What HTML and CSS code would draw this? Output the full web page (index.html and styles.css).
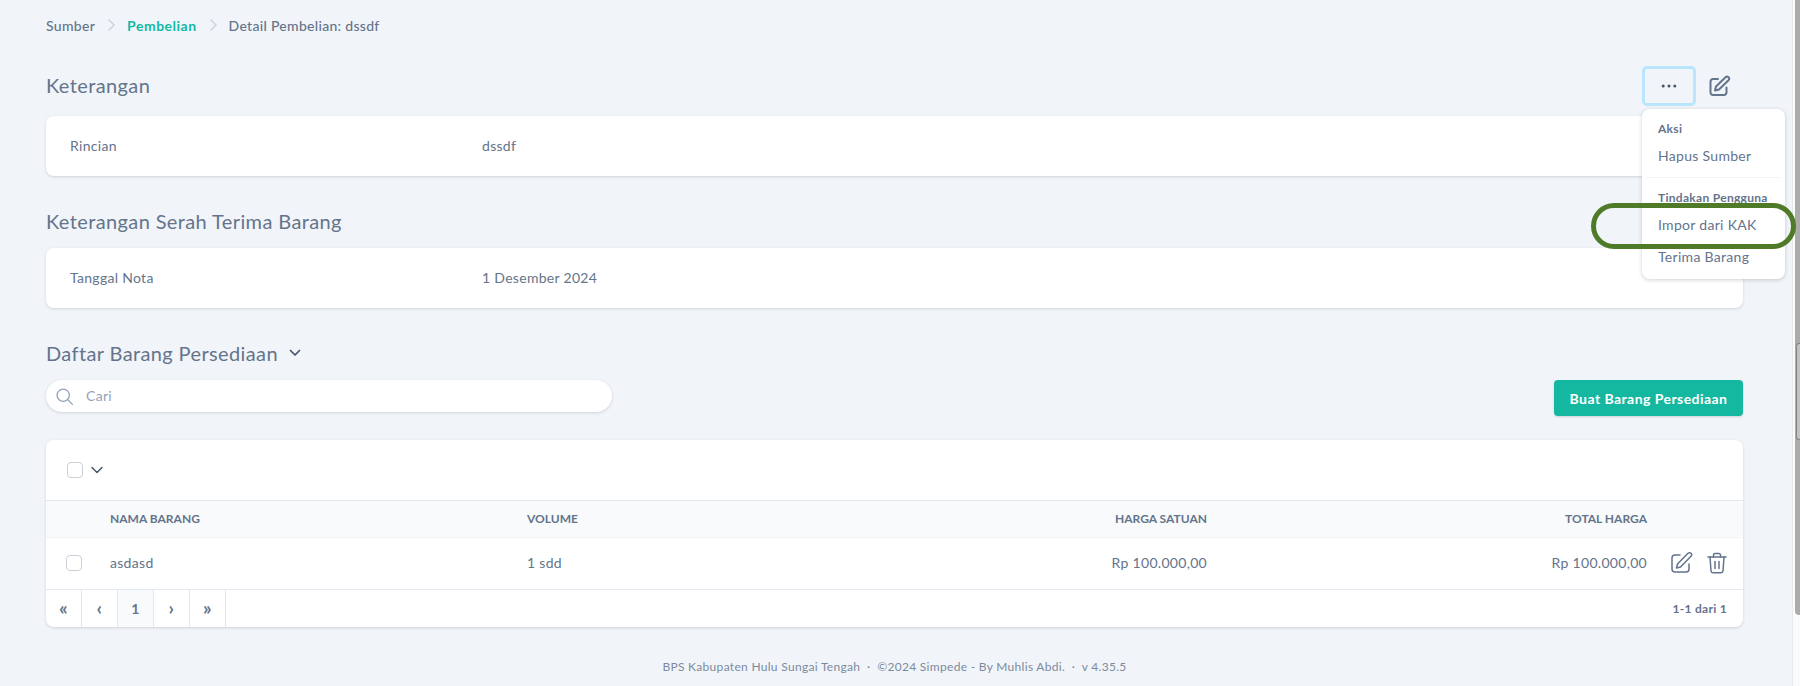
FILE: index.html
```html
<!DOCTYPE html>
<html lang="id">
<head>
<meta charset="utf-8">
<title>Detail Pembelian: dssdf</title>
<link rel="stylesheet" href="styles.css">
</head>
<body>
<div class="page">
  <main class="content">
    <nav class="crumbs">
      <span>Sumber</span>
      <svg class="crumb-sep" viewBox="0 0 20 20" fill="none" stroke="currentColor" stroke-width="1.5"><path d="M7.500 4.500 13 10l-5.500 5.500"/></svg>
      <span class="crumb-active">Pembelian</span>
      <svg class="crumb-sep" viewBox="0 0 20 20" fill="none" stroke="currentColor" stroke-width="1.5"><path d="M7.500 4.500 13 10l-5.500 5.500"/></svg>
      <span>Detail Pembelian: dssdf</span>
    </nav>

    <header class="head-row">
      <h2 class="section-title">Keterangan</h2>
      <div class="head-actions">
        <button class="more-btn" type="button" aria-label="Aksi">
          <svg viewBox="0 0 24 24" width="20" height="20" fill="currentColor"><circle cx="5" cy="12" r="1.800"/><circle cx="12" cy="12" r="1.800"/><circle cx="19" cy="12" r="1.800"/></svg>
        </button>
        <svg class="head-edit" viewBox="0 0 24 24" fill="none" stroke="currentColor" stroke-width="2" stroke-linecap="round" stroke-linejoin="round"><path d="M11 5H6a2.500 2.500 0 0 0-2.500 2.500v11A2.500 2.500 0 0 0 6 21h11a2.500 2.500 0 0 0 2.500-2.500v-5"/><path d="M18.500 3.200a2.100 2.100 0 0 1 3 3L12 15.500l-4 1 1-4z"/></svg>
        <div class="menu">
          <div class="menu-label">Aksi</div>
          <div class="menu-item menu-item-hapus">Hapus Sumber</div>
          <div class="menu-divider"></div>
          <div class="menu-label menu-label-user">Tindakan Pengguna</div>
          <div class="menu-item menu-item-kak">Impor dari KAK</div>
          <div class="menu-item menu-item-last">Terima Barang</div>
          <div class="highlight"></div>
        </div>
      </div>
    </header>
    <section class="card info-card">
      <div class="info-label">Rincian</div>
      <div>dssdf</div>
    </section>

    <h2 class="section-title title-second">Keterangan Serah Terima Barang</h2>
    <section class="card info-card info-card-second">
      <div class="info-label">Tanggal Nota</div>
      <div>1 Desember 2024</div>
    </section>

    <h2 class="section-title title-third">Daftar Barang Persediaan
      <svg class="title-chevron" viewBox="0 0 20 20" fill="none" stroke="currentColor" stroke-width="1.700" stroke-linecap="round" stroke-linejoin="round"><path d="m5.500 7.500 4.500 4.500 4.500-4.500"/></svg>
    </h2>

    <div class="toolbar">
      <div class="search">
        <svg class="search-icon" viewBox="0 0 24 24" fill="none" stroke="currentColor" stroke-width="1.500" stroke-linecap="round"><circle cx="10.500" cy="10.500" r="7"/><path d="m15.800 15.800 5.200 5.200"/></svg>
        <span class="search-text">Cari</span>
      </div>
      <button class="primary-btn" type="button">Buat Barang Persediaan</button>
    </div>

    <section class="card table-card">
      <div class="table-top">
        <span class="check"></span>
        <svg class="top-chevron" viewBox="0 0 20 20" fill="none" stroke="currentColor" stroke-width="1.500" stroke-linecap="round" stroke-linejoin="round"><path d="m5 7.500 5 5 5-5"/></svg>
      </div>
      <div class="grid-row grid-head">
        <span></span>
        <span>NAMA BARANG</span>
        <span>VOLUME</span>
        <span class="num">HARGA SATUAN</span>
        <span class="num">TOTAL HARGA</span>
        <span></span>
      </div>
      <div class="grid-row grid-body">
        <span class="check"></span>
        <span>asdasd</span>
        <span>1 sdd</span>
        <span class="num">Rp 100.000,00</span>
        <span class="num">Rp 100.000,00</span>
        <span class="row-actions">
          <svg viewBox="0 0 24 24" fill="none" stroke="currentColor" stroke-width="1.500" stroke-linecap="round" stroke-linejoin="round"><path d="M11 4H6a3 3 0 0 0-3 3v11a3 3 0 0 0 3 3h11a3 3 0 0 0 3-3v-5"/><path d="M19 2.300a2.100 2.100 0 0 1 3 3L11.500 16l-4 1 1-4z"/></svg>
          <svg viewBox="0 0 24 24" fill="none" stroke="currentColor" stroke-width="1.500" stroke-linecap="round" stroke-linejoin="round"><path d="M3 6h18"/><path d="M8.500 6V4a1.500 1.500 0 0 1 1.500-1.500h4A1.500 1.500 0 0 1 15.500 4v2"/><path d="m5 6 1 14a2 2 0 0 0 2 1.800h8a2 2 0 0 0 2-1.800l1-14"/><path d="M10 10.500v7M14 10.500v7"/></svg>
        </span>
      </div>
      <div class="pager">
        <span class="page-btn page-glyph">«</span>
        <span class="page-btn page-glyph">‹</span>
        <span class="page-btn page-current">1</span>
        <span class="page-btn page-glyph">›</span>
        <span class="page-btn page-glyph">»</span>
        <span class="page-count">1-1 dari 1</span>
      </div>
    </section>

    <footer class="footer">BPS Kabupaten Hulu Sungai Tengah &nbsp;·&nbsp; ©2024 Simpede - By Muhlis Abdi. &nbsp;·&nbsp; v 4.35.5</footer>
  </main>
  <aside class="scrollbar"><div class="thumb"><div class="thumb-over"></div></div></aside>
</div>
</body>
</html>
```

FILE: styles.css
```css
* { box-sizing: border-box; }
html, body { margin: 0; height: 686px; overflow: hidden; }
body {
  background: #f1f5f9;
  color: #64748b;
  font-family: "Lato", "Open Sans", sans-serif;
  font-size: 14px;
  letter-spacing: .3px;
}
.page { display: flex; height: 686px; }
.content { flex: 1; min-width: 0; padding: 16px 49px 0 46px; }
.scrollbar { width: 8px; background: #fafbfc; border-left: 1px solid #e6e8ec; }
.thumb { position: relative; width: 5px; height: 615px; margin-left: 2px; background: #ababab; border-bottom-left-radius: 4px; }
.thumb-over { position: absolute; top: 343px; left: 1px; width: 4px; height: 97px; background: #c2c2c2; border: 1px solid #858585; border-right: 0; border-radius: 3px 0 0 3px; }

.crumbs { display: flex; align-items: center; height: 18px; font-size: 14px; font-weight: 500; }
.crumb-sep { width: 20px; height: 20px; margin: 0 6px; color: #cbd5e1; }
.crumb-active { color: #14b8a6; font-weight: 700; letter-spacing: .5px; }

.head-row { display: flex; justify-content: space-between; align-items: center; margin-top: 32px; height: 40px; }
.section-title { margin: 0; font-size: 20px; font-weight: 400; color: #64748b; letter-spacing: .38px; }
.head-row .section-title { padding-bottom: 3px; }
.head-actions { position: relative; display: flex; align-items: center; }
.more-btn {
  display: flex; align-items: center; justify-content: center;
  width: 54px; height: 40px; padding: 0; margin-right: 11px;
  color: #475569; background: transparent;
  border: 3px solid #bae6fd; border-radius: 5px;
}
.head-edit { width: 24px; height: 24px; margin-right: 12px; color: #64748b; }
.menu {
  position: absolute; z-index: 5; top: 43px; left: 0; width: 143px; height: 170px;
  padding: 12px 16px; background: #fff; border-radius: 8px;
  box-shadow: 0 1px 4px rgba(15, 23, 42, .2);
  white-space: nowrap;
}
.menu-label { font-size: 12px; font-weight: 700; line-height: 16px; }
.menu-item { font-size: 14px; line-height: 20px; }
.menu-item-hapus { margin-top: 9px; }
.menu-divider { height: 1px; margin: 11px -12px 0; background: #f1f5f9; }
.menu-label-user { margin-top: 12px; }
.menu-item-kak { margin-top: 9px; }
.menu-item-last { margin-top: 12px; }
.highlight {
  position: absolute; top: 94px; left: -51px; width: 205px; height: 46px;
  border: 5px solid #4f7a28; border-radius: 23px;
}

.card { background: #fff; border-radius: 8px; box-shadow: 0 1px 3px rgba(15, 23, 42, .15); }
.info-card { display: grid; grid-template-columns: 412px 1fr; align-items: center; height: 60px; margin-top: 10px; padding: 0 24px 2px; }
.title-second { margin-top: 26px; line-height: 38px; height: 40px; }
.info-card-second { margin-top: 6px; }
.title-third { display: flex; align-items: center; gap: 7px; margin-top: 26px; height: 40px; padding-bottom: 3px; }
.title-chevron { width: 20px; height: 20px; color: #475569; }

.toolbar { display: flex; justify-content: space-between; align-items: flex-start; height: 36px; margin-top: 6px; }
.search {
  display: flex; align-items: center; width: 566px; height: 32px; padding-left: 8px;
  color: #94a3b8; background: #fff; border-radius: 16px;
  box-shadow: 0 1px 3px rgba(15, 23, 42, .15);
}
.search-icon { width: 21px; height: 21px; margin-right: 11px; }
.search-text { padding-bottom: 2px; }
.primary-btn {
  width: 189px; height: 36px; padding: 0;
  font: 700 14px "Lato", sans-serif; letter-spacing: .45px; color: #fff; background: #14b8a0;
  border: 0; border-radius: 4px; box-shadow: 0 1px 2px rgba(15, 23, 42, .15);
}

.table-card { margin-top: 24px; height: 187px; overflow: hidden; }
.table-top { display: flex; align-items: center; gap: 4px; height: 60px; padding-left: 21px; }
.check { display: block; width: 16px; height: 16px; background: #fff; border: 1px solid #cbd0d8; border-radius: 4px; }
.top-chevron { width: 20px; height: 20px; color: #475569; }
.grid-row { display: grid; grid-template-columns: 64px 417px 340px 340px 440px 96px; align-items: center; }
.grid-head {
  height: 38px; padding-bottom: 2px; font-size: 12px; font-weight: 700; letter-spacing: 0;
  background: #f8fafc; border-top: 1px solid #e2e8f0; border-bottom: 1px solid #f1f5f9;
}
.grid-body { height: 52px; padding-bottom: 2px; border-bottom: 1px solid #e2e8f0; }
.grid-body .check { margin-left: 20px; }
.num { text-align: right; }
.row-actions { display: flex; justify-content: flex-end; gap: 12px; padding-right: 14px; }
.row-actions svg { width: 24px; height: 24px; }

.pager { display: flex; align-items: stretch; height: 37px; font-weight: 700; }
.page-btn { display: flex; align-items: center; justify-content: center; width: 36px; border-right: 1px solid #e2e8f0; }
.page-glyph { font-size: 19px; line-height: 1; padding-bottom: 3px; }
.page-current { background: #f8fafc; }
.page-count { margin-left: auto; align-self: center; padding-right: 16px; font-size: 12px; }

.footer { margin-top: 32px; text-align: center; font-size: 12px; color: #7c8aa0; }
```
